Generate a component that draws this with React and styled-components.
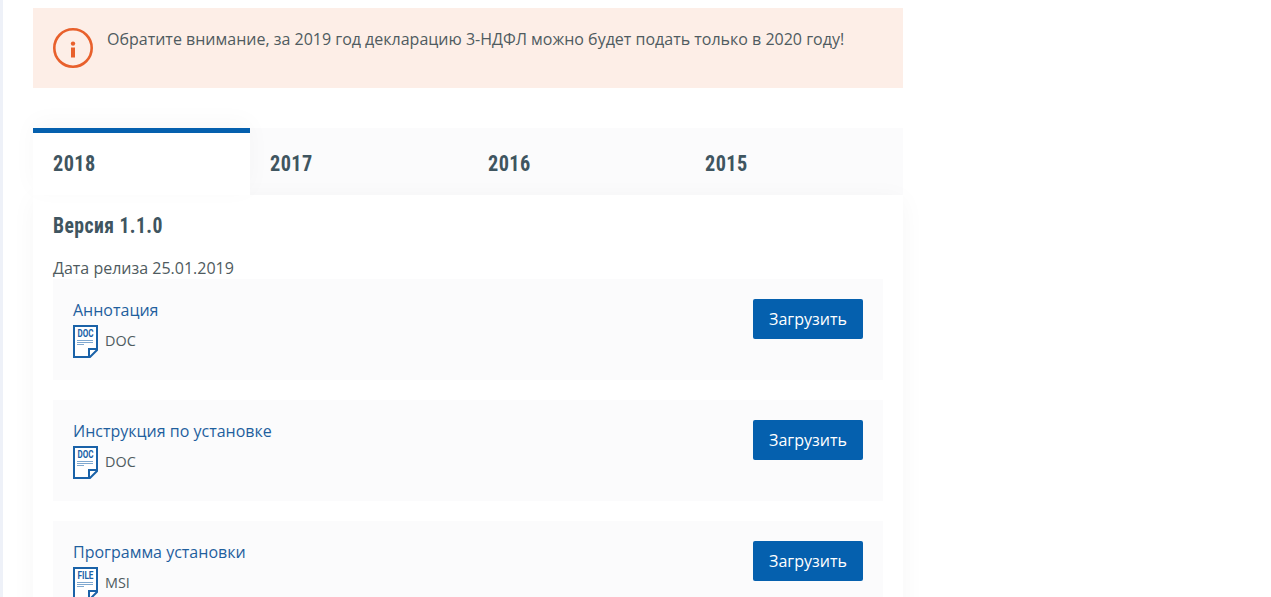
import React from "react";
import styled, { createGlobalStyle } from "styled-components";

const Global = createGlobalStyle`
  html, body { margin: 0; padding: 0; background: #fff; height: 597px; overflow: hidden; }
  body { font-family: "Open Sans", "Liberation Sans", sans-serif; font-size: 16px; color: #4f5b60; }
`;
const Page = styled.div`
  display: flex;
  height: 597px;
  overflow: hidden;
`;
const Rail = styled.div`
  width: 3px;
  flex: none;
  background: #eef1f8;
`;
const Content = styled.main`
  width: 870px;
  margin-left: 30px;
  padding-top: 8px;
`;
const Alert = styled.div`
  display: flex;
  gap: 14px;
  height: 80px;
  box-sizing: border-box;
  padding: 20px;
  background: #fdeee7;
`;
const AlertText = styled.p`
  margin: 0;
  font-size: 16px;
  line-height: 22px;
`;
const Tabs = styled.div`
  display: grid;
  grid-template-columns: 217px 218px 217px 218px;
  margin-top: 40px;
  height: 67px;
  background: #fbfbfc;
`;
const Tab = styled.div`
  box-sizing: border-box;
  padding: ${p => (p.$active ? "14px 20px 0" : "19px 20px 0")};
  border-top: ${p => (p.$active ? "5px solid #0560ae" : "0")};
  background: ${p => (p.$active ? "#fff" : "transparent")};
  box-shadow: ${p => (p.$active ? "0 -6px 24px rgba(0,0,0,.03)" : "none")};
  font-family: "Roboto", "Liberation Sans", sans-serif;
  font-stretch: 75%;
  font-weight: 700;
  font-size: 22.5px;
  letter-spacing: 0.5px;
  line-height: 32px;
  color: #3f5560;
`;
const Narrow = styled.span`
  display: inline-block;
  transform: scaleX(${p => p.$scale});
  transform-origin: left center;
  white-space: nowrap;
`;
const Panel = styled.section`
  padding: 19px 20px 0;
  background: #fff;
  box-shadow: 0 4px 24px rgba(0,0,0,.04);
`;
const Title = styled.h3`
  margin: 0;
  font-family: "Roboto", "Liberation Sans", sans-serif;
  font-stretch: 75%;
  font-weight: 700;
  font-size: 22.5px;
  letter-spacing: 0.5px;
  line-height: 22px;
  color: #3f5560;
`;
const Release = styled.div`
  margin-top: 21px;
  line-height: 22px;
  height: 22px;
  font-size: 16px;
`;
const List = styled.div`
  display: flex;
  flex-direction: column;
  gap: 20px;
`;
const Card = styled.article`
  display: flex;
  justify-content: space-between;
  height: 101px;
  box-sizing: border-box;
  padding: 20px;
  background: #fbfbfc;
`;
const Info = styled.div`
  display: flex;
  flex-direction: column;
  gap: 4px;
`;
const DocLink = styled.a`
  font-size: 16px;
  line-height: 22px;
  color: #1f5f9e;
`;
const Meta = styled.div`
  display: flex;
  align-items: center;
  gap: 7px;
  font-size: 14.4px;
`;
const MetaLabel = styled.span`
  margin-bottom: 2px;
`;
const Button = styled.button`
  width: 110px;
  height: 40px;
  border: 0;
  border-radius: 2px;
  background: #0560ae;
  color: #fff;
  font-family: inherit;
  font-size: 16px;
`;

const InfoIcon = () => (
  <svg width="40" height="40" viewBox="0 0 40 40" style={{ flex: "none" }} aria-hidden="true">
    <circle cx="20" cy="20" r="18.7" fill="none" stroke="#e8602c" strokeWidth="2.6" />
    <circle cx="20" cy="15.6" r="2.2" fill="#e8602c" />
    <rect x="18" y="19.5" width="4" height="10" fill="#e8602c" />
  </svg>
);

const FileIcon = ({ label }) => (
  <svg width="25" height="33" viewBox="0 0 25 33" style={{ flex: "none" }} aria-hidden="true">
    <path d="M1 1H24V25L17 32H1Z" fill="#fff" stroke="#1a62a8" strokeWidth="2" />
    <path d="M24 24H16V32" fill="none" stroke="#1a62a8" strokeWidth="2" />
    <text x="12.5" y="12" textAnchor="middle" textLength="16" lengthAdjust="spacingAndGlyphs" fontFamily="Roboto, sans-serif" fontWeight="700" fontSize="10.5" fill="#1a62a8">{label}</text>
    <path d="M4 15.5H20M4 17.5H20M4 19.5H11" stroke="#7fa8cf" strokeWidth="1" />
  </svg>
);

const docs = [
  { name: "Аннотация", type: "DOC" },
  { name: "Инструкция по установке", type: "DOC" },
  { name: "Программа установки", type: "MSI", icon: "FILE" },
];

export default function App() {
  return (
    <Page>
      <Global />
      <Rail />
      <Content>
        <Alert>
          <InfoIcon />
          <AlertText>Обратите внимание, за 2019 год декларацию 3-НДФЛ можно будет подать только в 2020 году!</AlertText>
        </Alert>
        <Tabs>
          {["2018", "2017", "2016", "2015"].map((y, i) => (
            <Tab key={y} $active={i === 0}><Narrow $scale={0.9}>{y}</Narrow></Tab>
          ))}
        </Tabs>
        <Panel>
          <Title><Narrow $scale={0.875}>Версия 1.1.0</Narrow></Title>
          <Release>Дата релиза 25.01.2019</Release>
          <List>
            {docs.map(d => (
              <Card key={d.name}>
                <Info>
                  <DocLink>{d.name}</DocLink>
                  <Meta>
                    <FileIcon label={d.icon || d.type} />
                    <MetaLabel>{d.type}</MetaLabel>
                  </Meta>
                </Info>
                <Button>Загрузить</Button>
              </Card>
            ))}
          </List>
        </Panel>
      </Content>
    </Page>
  );
}
